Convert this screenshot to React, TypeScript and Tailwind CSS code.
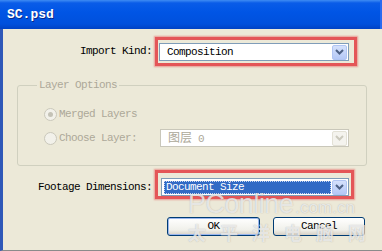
import React from "react";

const mono = "font-['Liberation_Mono','Noto_Sans_CJK_SC',monospace]";

function Arrow({ disabled }: { disabled?: boolean }) {
  return (
    <div
      className={
        disabled
          ? "w-[15px] h-[15px] rounded-[2px] flex items-center justify-center bg-[#f4f3ee] border border-[#e3e1d6]"
          : "w-[15px] h-[15px] rounded-[2px] flex items-center justify-center bg-[linear-gradient(#d5e1fc,#b4c8f6)] border border-[#b1c5f3]"
      }
    >
      <svg width="9" height="6" viewBox="0 0 9 6">
        <path
          d="M1 1 L4.5 4.5 L8 1"
          stroke={disabled ? "#cbc9bd" : "#4d6185"}
          strokeWidth="2"
          fill="none"
        />
      </svg>
    </div>
  );
}

function Radio({ checked }: { checked?: boolean }) {
  return (
    <div className="w-[13px] h-[13px] rounded-full border border-[#cac8bb] bg-[#f2f1ea] flex items-center justify-center">
      {checked && <div className="w-[5px] h-[5px] rounded-full bg-[#c4c2b6]" />}
    </div>
  );
}

export default function App() {
  return (
    <div className={`relative w-[382px] h-[251px] overflow-hidden bg-[#ece9d8] flex flex-col ${mono} text-[11px] tracking-[-0.6px] text-black`}>
      {/* Title bar */}
      <div className="h-[29px] shrink-0 bg-[linear-gradient(#3f8cf3_0px,#0a5ce8_3px,#0055e5_12px,#0050dc_24px,#0042c4_29px)] flex items-center pl-[7px] border-r-[2px] border-[#2a6af0]">
        <span className="text-white font-bold text-[13px] tracking-normal leading-none [text-shadow:1px_1px_0_#0a2a8a]">
          SC.psd
        </span>
      </div>

      {/* Body */}
      <div className="flex-1 border-l-[3px] border-[#2f58b8] border-b border-b-[#8b8b8b] flex flex-col">
        {/* Import Kind row */}
        <div className="mt-[8px] flex items-center">
          <div className="w-[149px] text-right leading-[13px]">Import Kind:</div>
          <div className="ml-[3px] w-[202px] h-[29px] border-[3px] border-[#e45658] shadow-[0_0_1.5px_1px_rgba(230,90,90,0.55)] pt-[3px] pl-[1px]">
            <div className="w-[190px] h-[18px] bg-white border border-[#7f9db9] flex items-center justify-between pl-[7px] pr-[1px]">
              <span className="leading-[13px]">Composition</span>
              <Arrow />
            </div>
          </div>
        </div>

        {/* Layer Options group */}
        <div className="relative mt-[19px] ml-[14px] w-[350px] h-[81px] border border-[#d0d0bf] rounded-[3px] pl-[26px] pt-[22px] flex flex-col gap-[8px] text-[#aca899]">
          <span className="absolute left-[19px] top-[-7px] px-[2px] bg-[#ece9d8] leading-[13px]">
            Layer Options
          </span>
          <div className="flex items-center gap-[2px] h-[13px]">
            <Radio checked />
            <span className="leading-[13px]">Merged Layers</span>
          </div>
          <div className="flex items-center h-[18px]">
            <Radio />
            <span className="ml-[2px] w-[101px] leading-[13px]">Choose Layer:</span>
            <div className="w-[189px] h-[18px] bg-white border border-[#c9c7ba] flex items-center justify-between pl-[7px] pr-[1px]">
              <span className="leading-[13px] text-[#aca899]">
                <span className="font-['Noto_Sans_CJK_SC',sans-serif] text-[12px] tracking-normal">图层</span> 0
              </span>
              <Arrow disabled />
            </div>
          </div>
        </div>

        {/* Footage row */}
        <div className="mt-[4px] flex items-start">
          <div className="w-[149px] text-right leading-[13px] mt-[11px]">Footage Dimensions:</div>
          <div className="ml-[3px] w-[199px] h-[29px] border-[3px] border-[#e45658] shadow-[0_0_1.5px_1px_rgba(230,90,90,0.55)] pt-[5px] pl-[3px]">
            <div className="w-[188px] h-[18px] bg-white border border-[#7f9db9] flex items-center pl-[2px] pr-[1px]">
              <span className="flex-1 h-[13px] mr-[1px] bg-[#316ac5] text-white leading-[13px] pl-[2px] outline outline-1 outline-dotted outline-[#c8d6f0] -outline-offset-1">
                Document Size
              </span>
              <Arrow />
            </div>
          </div>
        </div>

        {/* Buttons */}
        <div className="mt-[18px] ml-[164px] flex gap-[13px]">
          <div className="w-[93px] h-[19px] rounded-[3px] border border-[#003c74] bg-[linear-gradient(#ffffff,#f0f0ea_70%,#d6d0c5)] shadow-[inset_0_0_0_1px_#9ab6ee] flex items-center justify-center leading-[13px]">
            OK
          </div>
          <div className="w-[92px] h-[19px] rounded-[3px] border border-[#003c74] bg-[linear-gradient(#ffffff,#f0f0ea_70%,#d6d0c5)] flex items-center justify-center leading-[13px]">
            Cancel
          </div>
        </div>
      </div>

      {/* Watermark */}
      <div className="absolute left-[188px] top-[191px] pointer-events-none font-['Liberation_Sans',sans-serif] tracking-normal text-white/70 [text-shadow:0_0_1px_rgba(110,110,110,0.5)] whitespace-nowrap">
        <div className="flex items-baseline leading-none">
          <span className="text-[27px] tracking-[-0.5px]">PConline</span>
          <span className="text-[17px] ml-[2px]">.com.cn</span>
        </div>
        <div className="mt-[5px] font-['Noto_Sans_CJK_SC',sans-serif] text-[18px] leading-none tracking-[14px] font-bold">
          太平洋电脑网
        </div>
      </div>
    </div>
  );
}
